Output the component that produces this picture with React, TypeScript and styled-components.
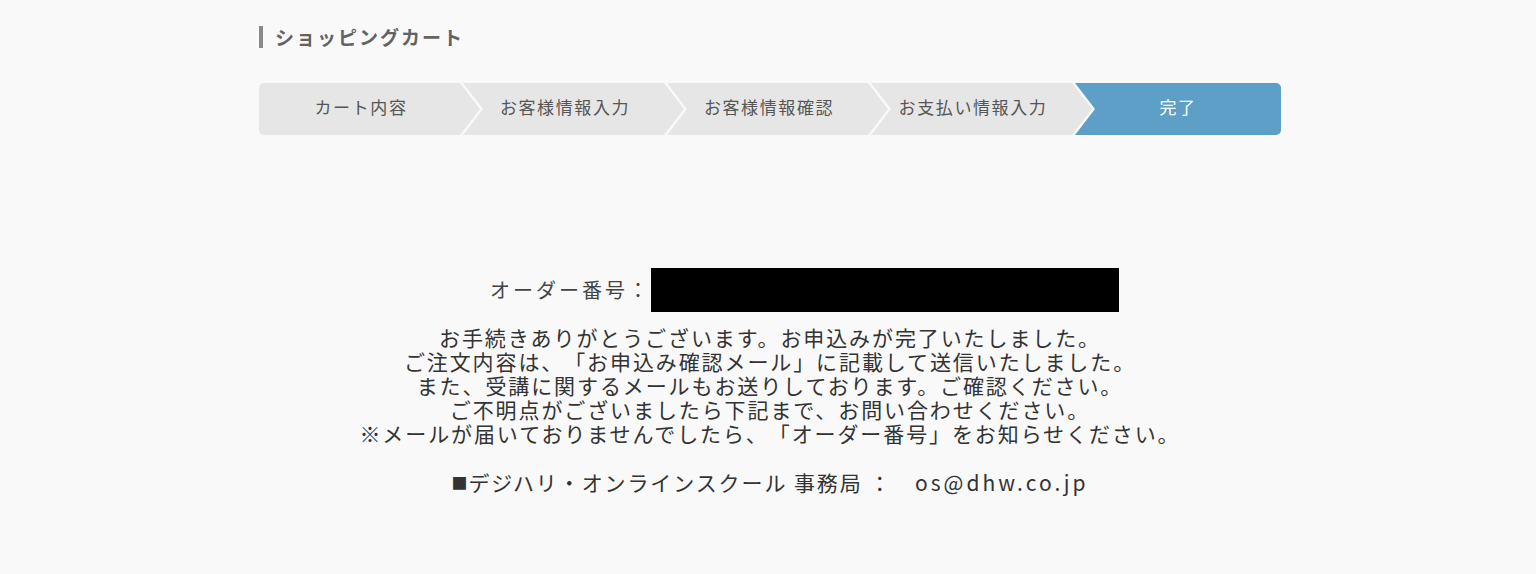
import React from "react";
import styled, { createGlobalStyle } from "styled-components";

const GlobalStyle = createGlobalStyle`
  html, body {
    margin: 0;
    padding: 0;
    background: #f9f9f9;
  }
  body {
    font-family: "Noto Sans CJK JP", "Noto Sans", sans-serif;
    color: #333;
    text-spacing-trim: space-all;
  }
`;

const Page = styled.div`
  box-sizing: border-box;
  width: 1026px;
  margin: 0 auto;
  padding: 26px 0 0 4px;
  min-height: 574px;
`;

const Title = styled.h1`
  margin: 0;
  border-left: 4px solid #8a8a8a;
  padding-left: 12px;
  font-size: 19px;
  line-height: 22px;
  font-weight: 700;
  letter-spacing: 2px;
  color: #636363;
`;

const Steps = styled.ol`
  list-style: none;
  margin: 35px 0 0;
  padding: 0;
  display: flex;
  height: 52px;
`;

const Step = styled.li<{ $first?: boolean; $last?: boolean; $active?: boolean }>`
  flex: ${(p) => (p.$last ? "1 1 auto" : "0 0 221px")};
  margin-left: ${(p) => (p.$first ? "0" : "-17px")};
  display: flex;
  align-items: center;
  justify-content: center;
  padding: ${(p) => (p.$last ? "0 0 5px 0" : "0 17px 5px 0")};
  box-sizing: border-box;
  background: ${(p) => (p.$active ? "#5e9fc8" : "#e6e6e6")};
  color: ${(p) => (p.$active ? "#ffffff" : "#555")};
  font-size: 17px;
  letter-spacing: 1.6px;
  border-radius: ${(p) => (p.$first ? "5px 0 0 5px" : p.$last ? "0 5px 5px 0" : "0")};
  clip-path: ${(p) =>
    p.$first
      ? "polygon(0 0, calc(100% - 20px) 0, 100% 50%, calc(100% - 20px) 100%, 0 100%)"
      : p.$last
      ? "polygon(0 0, 100% 0, 100% 100%, 0 100%, 20px 50%)"
      : "polygon(0 0, calc(100% - 20px) 0, 100% 50%, calc(100% - 20px) 100%, 0 100%, 20px 50%)"};
`;

const OrderRow = styled.div`
  margin-top: 133px;
  display: grid;
  grid-template-columns: 392px 468px;
  align-items: center;
`;

const OrderLabel = styled.div`
  text-align: right;
  font-size: 20px;
  letter-spacing: 3px;
  color: #444;
  padding-bottom: 2px;
`;

const MaskBox = styled.div`
  height: 44px;
  background: #000;
`;

const Message = styled.div`
  margin-top: 13px;
  text-align: center;
  font-size: 21px;
  line-height: 24px;
  letter-spacing: 1.9px;
  color: #333;
`;

const Line = styled.p`
  margin: 0;
`;

const Contact = styled.p`
  margin: 25px 0 0;
  text-align: center;
  font-size: 21px;
  line-height: 24px;
  letter-spacing: 1.9px;
  color: #333;
  white-space: pre;
`;

const Square = styled.span`
  font-size: 16px;
  letter-spacing: 1px;
  vertical-align: 2px;
`;

const Mail = styled.span`
  letter-spacing: 3px;
`;

const steps = ["カート内容", "お客様情報入力", "お客様情報確認", "お支払い情報入力", "完了"];

const lines = [
  "お手続きありがとうございます。お申込みが完了いたしました。",
  "ご注文内容は、「お申込み確認メール」に記載して送信いたしました。",
  "また、受講に関するメールもお送りしております。ご確認ください。",
  "ご不明点がございましたら下記まで、お問い合わせください。",
  "※メールが届いておりませんでしたら、「オーダー番号」をお知らせください。",
];

export default function App() {
  return (
    <>
      <GlobalStyle />
      <Page>
        <Title>ショッピングカート</Title>
        <Steps>
          {steps.map((s, i) => (
            <Step
              key={s}
              $first={i === 0}
              $last={i === steps.length - 1}
              $active={i === steps.length - 1}
            >
              {s}
            </Step>
          ))}
        </Steps>
        <OrderRow>
          <OrderLabel>オーダー番号：</OrderLabel>
          <MaskBox />
        </OrderRow>
        <Message>
          {lines.map((l) => (
            <Line key={l}>{l}</Line>
          ))}
        </Message>
        <Contact>
          <Square>■</Square>
          {"デジハリ・オンラインスクール 事務局 ：　"}
          <Mail>os@dhw.co.jp</Mail>
        </Contact>
      </Page>
    </>
  );
}
